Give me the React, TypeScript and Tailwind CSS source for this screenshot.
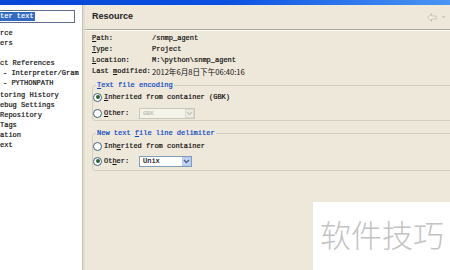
import React from "react";

const mono = "font-['Liberation_Mono','Noto_Sans_CJK_SC',monospace] [-webkit-text-stroke:0.2px_currentColor]";

function Radio({ checked }: { checked?: boolean }) {
  return (
    <span className="w-[9px] h-[9px] rounded-full border border-[#41607e] bg-white flex items-center justify-center shrink-0">
      {checked && <span className="w-[4px] h-[4px] rounded-full bg-[#2e5f36]" />}
    </span>
  );
}

function Chevron({ color }: { color: string }) {
  return (
    <svg width="7" height="5" viewBox="0 0 7 5">
      <path d="M1 1 L3.5 3.5 L6 1" stroke={color} strokeWidth="1.4" fill="none" />
    </svg>
  );
}

export default function App() {
  const tree: [string, number][] = [
    ["rce", 0],
    ["ers", 0],
    ["", 0],
    ["ct References", 0],
    ["- Interpreter/Gram", 3],
    ["- PYTHONPATH", 3],
    ["toring History", 0],
    ["ebug Settings", 0],
    ["Repository", 0],
    ["Tags", 0],
    ["ation", 0],
    ["ext", 0],
  ];
  return (
    <div className="w-[450px] h-[270px] relative overflow-hidden flex flex-col bg-[#ede8d9] text-[#111]">
      <div className="h-[5px] shrink-0 bg-linear-to-r from-[#0846d6] via-[#0a50e2] to-[#4a94f4]" />
      <div className="flex-1 flex min-h-0">
        {/* left pane */}
        <div className={`w-[82px] shrink-0 bg-white pt-[5px] overflow-hidden ${mono} text-[7px]`}>
          <div className="h-[13px] w-[76px] -ml-[1px] border border-[#5d6f8c] flex items-center">
            <span className="bg-[#316ac5] text-white h-[9px] leading-[9px] pr-[1px]">ter text</span>
          </div>
          <div className="mt-[5px] flex flex-col">
            {tree.map(([t, pl], i) => (
              <div
                key={i}
                className={`h-[10px] leading-[10px] whitespace-nowrap ${i === 6 ? "mt-[2px]" : ""}`}
                style={{ paddingLeft: pl }}
              >
                {t}
              </div>
            ))}
          </div>
        </div>
        <div className="w-[1px] shrink-0 bg-[#c6c2b4]" />
        <div className="w-[2px] shrink-0 bg-[#e2ddcd]" />
        {/* right pane */}
        <div className="flex-1 flex flex-col overflow-hidden">
          <div className="h-[24px] shrink-0 flex items-center justify-between pl-[7px] pr-[4px]">
            <span className="font-['Liberation_Sans',Arial,sans-serif] font-bold text-[9px] text-[#222]">Resource</span>
            <div className="flex items-center gap-[4px] opacity-60">
              <svg width="10" height="9" viewBox="0 0 10 9">
                <path d="M4.5 0.5 L0.8 4.5 L4.5 8.5 L4.5 6 L9.2 6 L9.2 3 L4.5 3 Z" fill="#f4f2ea" stroke="#a9a79c" strokeWidth="0.9" />
              </svg>
              <svg width="5" height="4" viewBox="0 0 5 4">
                <path d="M0.5 1 L2.5 3 L4.5 1 Z" fill="#b0ad9f" />
              </svg>
            </div>
          </div>
          <div className="h-[1px] bg-[#aca899]" />
          <div className="h-[1px] bg-[#fbfaf5]" />
          <div className={`pl-[7px] pt-[2px] grid grid-cols-[60px_1fr] ${mono} text-[7px] leading-[11px]`}>
            <div className="h-[11px]"><span className="underline">P</span>ath:</div>
            <div className="h-[11px]">/snmp_agent</div>
            <div className="h-[11px]"><span className="underline">T</span>ype:</div>
            <div className="h-[11px]">Project</div>
            <div className="h-[11px]"><span className="underline">L</span>ocation:</div>
            <div className="h-[11px]">M:\python\snmp_agent</div>
            <div className="h-[11px] whitespace-nowrap">Last <span className="underline">m</span>odified:</div>
            <div className="h-[11px] whitespace-nowrap font-['Noto_Sans_CJK_SC',sans-serif] text-[7.6px] [-webkit-text-stroke:0px]">2012年6月8日下午06:40:16</div>
          </div>

          <fieldset className={`ml-[7px] -mr-[20px] mt-[4px] border border-[#d0cfbd] rounded-[3px] pb-[1px] ${mono} text-[7px]`}>
            <legend className="ml-[3px] px-[1px] h-[8px] leading-[8px] text-[#0c46c8]">
              <span className="underline">T</span>ext file encoding
            </legend>
            <div className="flex flex-col gap-[4px] pt-[2px]">
              <div className="h-[12px] flex items-center">
                <Radio checked />
                <span className="ml-[2px]"><span className="underline">I</span>nherited from container (GBK)</span>
              </div>
              <div className="h-[12px] flex items-center">
                <Radio />
                <span className="ml-[2px] w-[33px]"><span className="underline">O</span>ther:</span>
                <div className="ml-[2px] w-[56px] h-[11px] border border-[#c9c7ba] bg-[#f5f4ea] flex items-center">
                  <span className="flex-1 pl-[3px] text-[#c2bfb2] text-[6px]">GBK</span>
                  <span className="w-[9px] h-[9px] bg-[#eeede5] border border-[#dcdad0] flex items-center justify-center">
                    <Chevron color="#c9c7ba" />
                  </span>
                </div>
              </div>
            </div>
          </fieldset>

          <fieldset className={`ml-[7px] -mr-[20px] mt-[8px] border border-[#d0cfbd] rounded-[3px] pb-[3px] ${mono} text-[7px]`}>
            <legend className="ml-[3px] px-[1px] h-[8px] leading-[8px] text-[#0c46c8]">
              New text <span className="underline">f</span>ile line delimiter
            </legend>
            <div className="flex flex-col gap-[3px] pt-[3px]">
              <div className="h-[12px] flex items-center">
                <Radio />
                <span className="ml-[2px]">Inh<span className="underline">e</span>rited from container</span>
              </div>
              <div className="h-[12px] flex items-center">
                <Radio checked />
                <span className="ml-[2px] w-[33px]">Ot<span className="underline">h</span>er:</span>
                <div className="ml-[2px] w-[53px] h-[11px] border border-[#7f9db9] bg-white flex items-center">
                  <span className="flex-1 pl-[3px]">Unix</span>
                  <span className="w-[9px] h-[9px] bg-[#c1d3fb] border border-[#b4c8f6] flex items-center justify-center">
                    <Chevron color="#4d6185" />
                  </span>
                </div>
              </div>
            </div>
          </fieldset>
        </div>
      </div>

      {/* watermark overlay */}
      <div className="absolute left-[313px] top-[202px] right-0 bottom-0 bg-white">
        <div className="absolute left-[7px] top-[16px] whitespace-nowrap font-['Noto_Sans_CJK_SC',sans-serif] font-light text-[31px] leading-[31px] text-[#c3c3c3]">
          软件技巧
        </div>
      </div>
    </div>
  );
}
